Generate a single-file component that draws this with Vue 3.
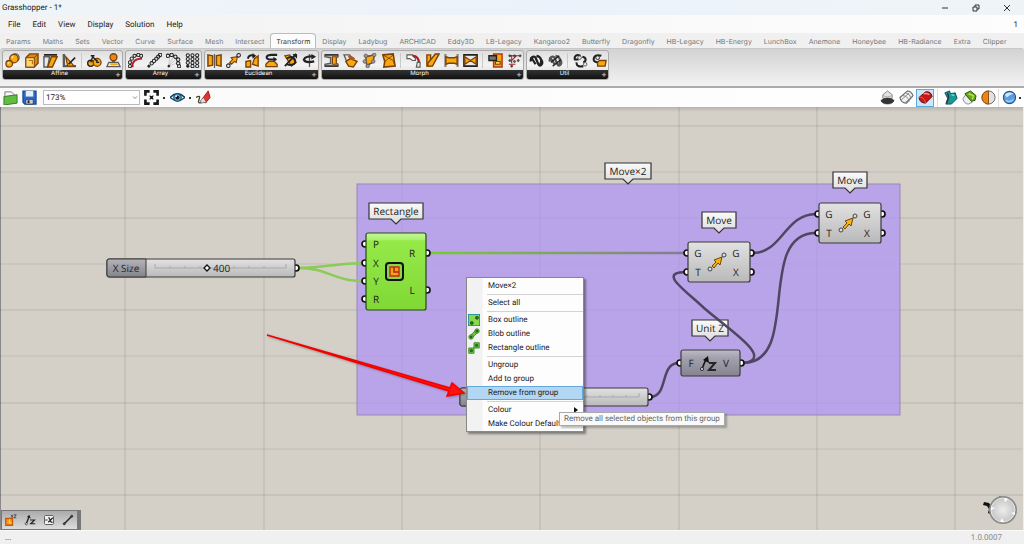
<script setup>
import { h, ref } from 'vue'

const amber = '#f9a90f'
const brown = '#7d4207'
const ink = '#222'
const grey = '#5c5c5c'
const pale = '#e9e9e9'
const red = '#b01f24'
const ring = (x, y, r) => `M${x - r} ${y}a${r} ${r} 0 1 0 ${2 * r} 0a${r} ${r} 0 1 0 ${-2 * r} 0z`
const rings = (r, ...points) => points.map(([x, y]) => ring(x, y, r)).join('')

// Each shape: [path, fill, stroke, stroke width]
const icons = {
  spheres: [[ring(11, 5, 4), pale, grey, 1.4], [ring(9.5, 6, 4.5), amber, brown, 1.4], [ring(4.5, 11.5, 3.5), amber, brown, 1.4], [rings(1, [8, 4.5], [3.7, 10.5]), '#ffe9a0', 'none', 0]],
  box: [['M2 5L6 1H15V11L11 15H2z', '#d68a16', brown, 1.4], ['M2 5H11V15H2zM11 5L15 1', '#ffd36e', brown, 1], ['M5 8H9V12', 'none', '#b87712', 1.2]],
  shear: [['M1 4H7L5 15H1z', pale, grey, 1.5], ['M1 2H15', 'none', ink, 1.8], ['M9 4H15L10 15H5z', amber, brown, 1.5]],
  angle: [['M2 1V14H15', 'none', grey, 2.6], ['M4 4L13 14H6z', amber, brown, 1.3], ['M14 5L7 12', 'none', ink, 1.8]],
  bike: [[ring(4, 11, 3.3), amber, ink, 1.4], [ring(10.8, 10, 4.2), amber, brown, 1.4], ['M4 10L6 4L11 9M4 3H8', 'none', ink, 1.5], ['M10.5 7V10H13', 'none', ink, 1.2]],
  bust: [['M3 10H13L15 14.5H1z', '#eee', grey, 1.4], ['M4 11H12L13 13H5z', amber, 'none', 0], [ring(8, 4.5, 3.7), '#f0860f', brown, 1.4], ['M8 8.5V10', 'none', grey, 3]],
  curveArray: [[rings(1.7, [2, 14], [2, 10], [4, 6], [7, 3], [11, 2], [14, 3]), pale, ink, 1.1], ['M5 15C4 9 8 6 15 6', 'none', red, 2]],
  lineArray: [[rings(1.8, [5, 11], [7.5, 8.5], [10, 6], [12, 4], [14, 2]), pale, ink, 1.1], [ring(2, 14, 1.2), ink, ink, 1]],
  polarArray: [['M3 14L4 2M3 14L8 3M3 14L11 6M3 14L13 10', 'none', '#bbb', 0.7], [rings(1.8, [2, 3], [6, 2], [10, 4], [13, 7], [13, 11], [14, 14]), pale, ink, 1.1], [ring(3, 14, 1), ink, ink, 1]],
  gridArray: [[rings(1.7, [3, 2.5], [8, 2.5], [13, 2.5], [3, 6.5], [8, 6.5], [13, 6.5], [3, 10.5], [8, 10.5], [13, 10.5], [8, 14], [13, 14]), pale, ink, 1.1], [ring(3, 14, 1.3), ink, ink, 1]],
  mirror: [['M1 2L6 3V13L1 14z', amber, brown, 1.6], ['M10 3L15 2V14L10 13z', amber, brown, 1.6], ['M8 1V16', 'none', grey, 1.3]],
  move: [['M3 13L13 3', 'none', ink, 1.2], ['M4 10L7 7L5.5 5L12 4L11 10L9 9L6 12z', amber, brown, 1.2], [rings(1.9, [2.5, 13.5], [13.5, 2.5]), pale, ink, 1.1]],
  orient: [['M1 9L6 8V15H1z', amber, brown, 1.5], ['M10 6L14 3V14L8 12z', amber, brown, 1.5], ['M3 6C4 2 7 2 9 3', 'none', ink, 2.2], ['M8 0L12 3L8 6z', ink, 'none', 0]],
  rotate: [['M2 12L5 9H11L14 12V14.5H2z', amber, brown, 1.4], ['M13 7H6C1 6 2 2 8 2H14', 'none', ink, 2.2], ['M10 4L14 7L10 9z', ink, 'none', 0]],
  rotate3d: [['M2 3L7 2L14 10L9 14z', amber, brown, 1.4], ['M14 1L2 14M4 6C8 3 12 4 13 8C14 12 9 14 4 12', 'none', ink, 2], ['M10 1H15V6z', ink, 'none', 0]],
  axis: [['M8 1V15', 'none', grey, 1.4], ['M13 4C8 3 3 4 2 7C3 10 8 10 13 9', 'none', ink, 2.4], ['M10 1L15 4L10 7z', ink, 'none', 0]],
  bend: [['M1 2H15V4L13 5V11L15 12V14H1V12L7 11V5L1 4z', '#c5c5c5', grey, 1.5], ['M9 4H13V12H9z', amber, brown, 1.2], ['M1 2H15M1 14H15', 'none', ink, 1.4]],
  blend: [['M1 2H7L9 6L4 9z', pale, grey, 1.4], ['M3 9L8 6L15 9L11 15L6 14z', amber, brown, 1.5], ['M6 3L12 7', 'none', '#b1581c', 3.2]],
  cage: [['M4 4L13 2L12 10L5 13z', amber, brown, 1.5], ['M3 4L13 2L12 9L6 14', 'none', grey, 1], [rings(1.9, [4, 3], [13, 2], [3, 9], [12, 9], [6, 14]), '#999', grey, 0.8]],
  twisted: [['M2 2L13 1L15 14L3 15L4 9z', amber, brown, 1.7], ['M2 2L13 8L15 14M4 9L13 2', 'none', brown, 1]],
  flow: [['M1 2H7L10 6V8H7L4 6H1z', '#fafafa', grey, 1.2], ['M7 3C12 3 14 7 14 12', 'none', red, 2.4], ['M12 10H15V15H11z', pale, grey, 1.2]],
  split: [['M2 2H6V14H2z', amber, brown, 1.5], ['M11 1H15L8 14H3V11z', amber, brown, 1.5]],
  stretch: [['M1.5 1V15M14.5 1V15', 'none', '#888', 2.4], ['M2 4L5 5H11L14 4V12L11 11H5L2 12z', amber, brown, 1.5]],
  taper: [['M1 2H15V14H1z', pale, ink, 1.7], ['M2 4L8 8L2 12zM14 4L8 8L14 12z', amber, brown, 1.3]],
  boxmap: [['M6 1H15V15H6z', amber, '#b23a12', 1.6], ['M1 3H9V8H1z', '#807466', ink, 1.5], ['M8 9H13V12H8z', '#ffd45f', brown, 1.2]],
  points: [['M2 3H13M5 2V11M10 3L4 9M2 12L9 12', 'none', red, 1.1], [rings(1.1, [3, 3], [8, 3], [14, 3], [3, 8], [8, 9], [12, 8], [5, 14]), grey, ink, 0.6]],
  knotted: [['M2 9C1 5 5 2 7 5L10 12C12 16 16 11 13 7M2 4L7 12M8 3C14 4 14 10 11 14', 'none', ink, 2.4]],
  knotted2: [['M2 9C1 5 5 2 7 5L10 12C12 16 16 11 13 7M2 4L7 12M8 3C14 4 14 10 11 14', 'none', '#555', 2.4], ['M3 10L12 3M5 14L14 7', 'none', ink, 1.4]],
  cycle: [['M8 3C4 1 1 3 2 7H6M10 4C15 5 14 9 11 10M4 10C3 14 7 15 11 14', 'none', ink, 2.2], [rings(1.9, [7, 5], [13, 12]), pale, grey, 1]],
  cyclebox: [['M10 3C4 1 1 4 2 8C3 10 5 10 7 10', 'none', ink, 2.2], [ring(6, 5, 2), pale, ink, 1], ['M6 10L8 8H15L14 14H6z', amber, brown, 1.5]],
  folder: [['M2 2H9L12 5V14H2z', '#f7f7f7', '#777', 1], ['M1 7L15 5V14L1 16z', '#63bd43', '#317a26', 1]],
  save: [['M1 1H15V15H3L1 13z', '#2b69c6', '#16428e', 1.2], ['M4 1H12V7H4z', '#e8eef8', 'none', 0], ['M4 10H12V15H4z', '#c8cdd4', '#333', 0.8], ['M6 11H8V14H6z', '#222', 'none', 0]],
  extents: [['M1.5 6V1.5H6M10 1.5H14.5V6M14.5 10V14.5H10M6 14.5H1.5V10', 'none', '#171717', 2.8], ['M6 6L10 10M10 6L6 10', 'none', '#171717', 1.3], [ring(8, 8, 1.5), '#171717', 'none', 0]],
  eye: [['M0 8Q8 0 16 8Q8 15 0 8z', '#fff', '#183c57', 1.4], [ring(8, 8, 4), '#55a9cf', '#174b6c', 1.2], [ring(8, 8, 2), '#0c1f2d', 'none', 0], [ring(6.5, 6.5, 1), '#fff', 'none', 0]],
  brush: [['M0 8C5 5 4 8 3 11C2 14 4 15 7 12', 'none', '#442', 1.4], ['M7 9L13 1L15 8L10 14z', '#e8312d', '#9c1717', 1], ['M5 11L8 8L11 13L5 14z', '#e8dcd8', '#655', 0.8]],
  shadow: [['M3 5L8 1L13 5V9H3z', '#e2e2e2', '#888', 1], ['M3 6Q8 9 13 6', 'none', '#aaa', 1], ['M1 11Q8 6 15 11Q14 15 8 15Q2 15 1 11z', '#333', '#222', 0.5]],
  wire: [['M1 8L9 1Q13 1 15 6L8 14Q2 14 1 8z', '#f2f2f2', '#666', 1.2], ['M4 6Q9 6 11 12M7 3Q12 4 13 9M2 11L11 3M6 14L14 7', 'none', '#888', 1]],
  solid: [['M1 8L8 2Q14 1 15 7L8 14Q2 14 1 8z', '#c91616', '#5f0707', 1], ['M1 8Q6 6 8 14', 'none', '#f15a50', 1], ['M6 4Q10 3 12 5', 'none', '#ff9188', 1.5]],
  teal: [['M2 3L7 1L8 4L13 3L15 9L9 15H3L5 9z', '#169a9a', '#064f58', 1], ['M5 3L6 8L4 14', 'none', '#333', 1.5], ['M9 5L12 6', 'none', '#7ee0dc', 1.5]],
  green: [['M1 9L4 5L11 13L7 15Q2 15 1 9z', '#eee', '#888', 1], ['M3 4L9 1L15 6L14 11L10 12z', '#67a917', '#294f0d', 1], ['M7 4L12 6L11 10', 'none', '#b4e559', 1.5]],
  halves: [[ring(8, 8, 7), '#e2e2e2', '#666', 1], ['M8 1A7 7 0 0 0 8 15z', '#e88718', '#8b4b0e', 1]],
  globe: [[ring(8, 8, 6.5), '#5d9cdf', '#25558b', 1.2], ['M3 5Q7 1 12 4Q8 5 5 8z', '#c9e8ff', 'none', 0], ['M4 11Q9 14 12 10', 'none', '#9cd1fa', 1.5]],
  boxOutline: [['M0 0H16V16H0z', '#8ad84d', '#1683b8', 2], [rings(2, [5, 12], [12, 5]), '#267a23', '#154d16', 1]],
  blobOutline: [['M4 12L12 4', 'none', '#3d8d2d', 5], ['M4 12L12 4', 'none', '#78c54c', 3], [rings(3, [4, 12], [12, 4]), '#8ad84d', '#2f7b27', 1], [rings(1.5, [4, 12], [12, 4]), '#267a23', '#154d16', 1]],
  rectOutline: [['M1 8H8V15H1zM8 1H15V8H8z', '#7bc94a', '#3d8d2d', 1.3], [rings(1.6, [4.5, 11.5], [11.5, 4.5]), '#267a23', '#154d16', 1]],
  square: [['M1 6H10V15H1z', '#f79a19', '#c95a08', 1.8], ['M6 7V12H9', 'none', '#ffd65b', 1.5], ['M8 1L11 5M11 1L8 5M12 1H15L12 5H15', 'none', '#333', 1]],
  unitz: [['M3 13L7 3', 'none', '#222', 1.8], ['M7 1L9 6L4 4z', '#222', 'none', 0], ['M8 8H14L9 13H15', 'none', '#222', 1.6], [ring(3, 13, 1.5), '#ddd', '#222', 0.8]],
  negative: [['M3 2H13L14 3V13L13 14H3L2 13V3z', '#f2f2f2', '#555', 1.2], ['M3 8H6M7 5H8L11 11H13M13 5L7 11', 'none', '#222', 1.6]],
  line: [['M3 13L13 3', 'none', '#222', 1.8], [rings(1.4, [3, 13], [13, 3]), '#555', '#222', 1]]
}

const Icon = (props) =>
  h('svg', { viewBox: '0 0 16 16', 'aria-hidden': 'true' },
    icons[props.name].map(([d, fill, stroke, width]) => h('path', { d, fill, stroke, 'stroke-width': width })))
Icon.props = ['name']

const menus = ['File', 'Edit', 'View', 'Display', 'Solution', 'Help']
const tabs = ['Params', 'Maths', 'Sets', 'Vector', 'Curve', 'Surface', 'Mesh', 'Intersect', 'Transform', 'Display', 'Ladybug', 'ARCHICAD', 'Eddy3D', 'LB-Legacy', 'Kangaroo2', 'Butterfly', 'Dragonfly', 'HB-Legacy', 'HB-Energy', 'LunchBox', 'Anemone', 'Honeybee', 'HB-Radiance', 'Extra', 'Clipper']
const activeTab = ref('Transform')
const panels = [
  { name: 'Affine', tools: ['spheres', 'box', 'shear', 'angle', '', 'bike', 'bust'] },
  { name: 'Array', tools: ['curveArray', 'lineArray', 'polarArray', 'gridArray'] },
  { name: 'Euclidean', tools: ['mirror', 'move', 'orient', 'rotate', 'rotate3d', 'axis'] },
  { name: 'Morph', tools: ['bend', 'blend', 'cage', 'twisted', '', 'flow', 'split', 'stretch', 'taper', '', 'boxmap', 'points'] },
  { name: 'Util', tools: ['knotted', 'knotted2', '', 'cycle', 'cyclebox'] }
]
const displayGroups = [['shadow', 'wire', 'solid'], ['teal', 'green', 'halves'], ['globe']]
const zoom = ref('173%')

const verticals = [125, 264, 402, 540, 679, 817, 955]
const horizontals = [19, 65, 111, 157, 203, 249, 296, 342, 388]
const moveNode = (x, y) => ({
  kind: 'grey', x, y, w: 62, h: 40,
  inputs: [['G', 11], ['T', 30]], outputs: [['G', 11], ['X', 30]]
})
const nodes = [
  { kind: 'green', x: 366, y: 126, w: 60, h: 77, inputs: [['P', 11], ['X', 30], ['Y', 48], ['R', 66]], outputs: [['R', 20], ['L', 57]] },
  moveNode(688, 135),
  moveNode(819, 96),
  { kind: 'dark', x: 681, y: 243, w: 59, h: 26, inputs: [['F', 13]], outputs: [['V', 13]] }
]
const callouts = [
  { text: 'Rectangle', x: 396, y: 96, w: 54 },
  { text: 'Move×2', x: 628, y: 56, w: 46 },
  { text: 'Move', x: 719, y: 105, w: 34 },
  { text: 'Move', x: 850, y: 65, w: 34 },
  { text: 'Unit Z', x: 710, y: 213, w: 36 }
]
const wires = [
  'M753 146C782 146 785 107 816 107',
  'M743 256C802 256 755 126 816 126',
  'M650 290C669 290 659 256 679 256'
]
const menuItems = [
  { text: 'Move×2' }, {}, { text: 'Select all' }, {},
  { text: 'Box outline', icon: 'boxOutline' }, { text: 'Blob outline', icon: 'blobOutline' }, { text: 'Rectangle outline', icon: 'rectOutline' }, {},
  { text: 'Ungroup' }, { text: 'Add to group' }, { text: 'Remove from group', hot: true }, {},
  { text: 'Colour', sub: true }, { text: 'Make Colour Default' }
]
</script>

<template>
  <div class="window">
    <header class="titlebar">
      <span>Grasshopper - 1*</span>
      <div class="window-buttons">
        <button aria-label="Minimise"><svg viewBox="0 0 8 8"><path d="M1 4H7" /></svg></button>
        <button aria-label="Restore"><svg viewBox="0 0 8 8"><path d="M1 3H5V7H1zM3 3V1H7V5H5" /></svg></button>
        <button aria-label="Close"><svg viewBox="0 0 8 8"><path d="M1 1L7 7M7 1L1 7" /></svg></button>
      </div>
    </header>

    <nav class="menubar">
      <button v-for="m in menus" :key="m">{{ m }}</button>
      <span class="document-count">1</span>
    </nav>

    <nav class="tabs">
      <button v-for="t in tabs" :key="t" :class="{ active: t === activeTab }" @click="activeTab = t">{{ t }}</button>
    </nav>

    <div class="ribbon">
      <section v-for="p in panels" :key="p.name" class="panel">
        <div class="tools">
          <template v-for="(t, i) in p.tools" :key="i">
            <button v-if="t" :aria-label="t"><Icon :name="t" /></button>
            <i v-else class="divider"></i>
          </template>
        </div>
        <div class="panel-name"><span>{{ p.name }}</span><b>+</b></div>
      </section>
    </div>

    <div class="toolbar">
      <button aria-label="Open"><Icon name="folder" /></button>
      <button aria-label="Save"><Icon name="save" /></button>
      <div class="zoom-box">
        <select v-model="zoom" aria-label="Zoom"><option>100%</option><option>173%</option><option>200%</option></select>
        <svg viewBox="0 0 6 4"><path d="M1 1L3 3L5 1" /></svg>
      </div>
      <button aria-label="Zoom extents"><Icon name="extents" /></button><i class="dot"></i>
      <button aria-label="Preview"><Icon name="eye" /></button><i class="dot"></i>
      <button aria-label="Sketch"><Icon name="brush" /></button>
      <div class="modes">
        <div v-for="g in displayGroups" :key="g[0]" class="mode-group">
          <button v-for="m in g" :key="m" :aria-label="m" :class="{ chosen: m === 'solid' }"><Icon :name="m" /></button>
        </div>
        <i class="dot"></i>
      </div>
    </div>

    <main class="canvas">
      <svg class="graph">
        <defs>
          <linearGradient id="grey" x2="0" y2="1"><stop offset="0" stop-color="#e2e2e2" /><stop offset="1" stop-color="#b9b9b9" /></linearGradient>
          <linearGradient id="green" x2="0" y2="1"><stop offset="0" stop-color="#c4f89a" /><stop offset=".09" stop-color="#a9f26c" /><stop offset=".1" stop-color="#95ea48" /><stop offset="1" stop-color="#80d835" /></linearGradient>
          <linearGradient id="dark" x2="0" y2="1"><stop offset="0" stop-color="#bdbbc6" /><stop offset=".3" stop-color="#a3a1ad" /><stop offset="1" stop-color="#85838f" /></linearGradient>
          <linearGradient id="label" x2="0" y2="1"><stop offset="0" stop-color="#b4b4ba" /><stop offset="1" stop-color="#83838b" /></linearGradient>
          <linearGradient id="callout" x2="0" y2="1"><stop offset="0" stop-color="#fafafa" /><stop offset="1" stop-color="#dcdcdc" /></linearGradient>
          <linearGradient id="fade" gradientUnits="userSpaceOnUse" x1="429" x2="685" y1="0" y2="0"><stop offset="0" stop-color="#78cb2e" /><stop offset="1" stop-color="#857b96" /></linearGradient>
          <linearGradient id="edge" x2="0" y2="1"><stop offset="0" stop-color="#000" stop-opacity=".14" /><stop offset="1" stop-color="#000" stop-opacity="0" /></linearGradient>
          <radialGradient id="dial"><stop offset="0" stop-color="#eee" /><stop offset="1" stop-color="#c4c4c4" /></radialGradient>
        </defs>
        <line v-for="x in verticals" :key="'v' + x" class="grid" :x1="x" :x2="x" y1="0" y2="100%" />
        <line v-for="(y, i) in horizontals" :key="'h' + y" :class="['grid', { minor: i % 2 }]" x1="0" x2="100%" :y1="y" :y2="y" />
        <rect class="group" x="357" y="77" width="543" height="231" />
        <rect width="100%" height="5" fill="url(#edge)" />

        <path class="wire live" d="M297 161C331 161 330 156 365 156M297 161C331 161 330 174 365 174" />
        <path class="wire" d="M429 146L685 146.1" stroke="url(#fade)" />
        <path v-for="w in wires" :key="w" class="wire" :d="w" />

        <g v-for="(c, i) in callouts" :key="'c' + i" :transform="`translate(${c.x} ${c.y})`">
          <path class="callout" :d="`M${-c.w / 2} 0H${c.w / 2}V16H5L0 21L-5 16H${-c.w / 2}z`" />
          <text y="12" text-anchor="middle">{{ c.text }}</text>
        </g>
        <path class="wire" d="M743 256C776 252 728 222 704 201C684 182 657 165 687 165" />

        <g v-for="(n, i) in nodes" :key="'n' + i" :transform="`translate(${n.x} ${n.y})`">
          <circle v-for="p in n.inputs" :key="'i' + p[1]" class="port" cx="-1" :cy="p[1]" r="3" />
          <circle v-for="p in n.outputs" :key="'o' + p[1]" class="port" :cx="n.w + 1" :cy="p[1]" r="3" />
          <rect :class="['node', n.kind]" :width="n.w" :height="n.h" rx="2" />
          <text v-for="p in n.inputs" :key="'ti' + p[1]" x="10" :y="p[1] + 4" text-anchor="middle">{{ p[0] }}</text>
          <text v-for="p in n.outputs" :key="'to' + p[1]" :x="n.w - 14" :y="p[1] + 4" text-anchor="middle">{{ p[0] }}</text>
        </g>
        <g transform="translate(385 155)">
          <rect class="emblem" x="1" y="1" width="17" height="17" rx="3" />
          <path d="M5 5H14V14H5z" fill="#f5a11b" stroke="#c42b10" stroke-width="1.4" /><path d="M9 5V10H14" fill="none" stroke="#b62314" stroke-width="1.6" />
        </g>
        <g v-for="(m, i) in [[708, 146], [839, 107]]" :key="'m' + i" :transform="`translate(${m[0]} ${m[1]})`">
          <path d="M2 16L16 2" stroke="#555" />
          <path d="M4 13L8 9L6 7L14 4L12 12L10 10L6 15z" fill="#f9b30c" stroke="#72420a" />
          <circle cx="2" cy="16" r="2" fill="#ddd" stroke="#444" /><circle cx="16" cy="2" r="2" fill="#ddd" stroke="#444" />
        </g>
        <g transform="translate(700 248)">
          <path d="M2 14L6 4" stroke="#111" stroke-width="1.6" /><path d="M8 1L9 8L3 5z" fill="#111" />
          <circle cx="2" cy="14" r="1.6" fill="#ccc" stroke="#333" /><path d="M9 8H15L9 15H16" fill="none" stroke="#252525" stroke-width="2" />
        </g>

        <g transform="translate(107 152)">
          <circle class="port" cx="189" cy="9" r="3" />
          <rect class="node grey" width="188" height="18" rx="2" /><path d="M2 0H39V18H2Q0 18 0 16V2Q0 0 2 0z" class="slider-label" />
          <path class="rule" d="M48 9H179M48 5V9M63 7V9M78 7V9M93 7V9M127 7V9M142 7V9M157 7V9M179 5V9" />
          <path d="M100 6L103 9L100 12L97 9z" fill="#fff" stroke="#111" stroke-width="1.3" />
          <text x="19" y="13" text-anchor="middle">X Size</text><text x="106" y="13">400</text>
        </g>
        <g transform="translate(460 281)">
          <circle class="port" cx="189" cy="9" r="3" />
          <rect class="node grey" width="188" height="18" rx="2" /><path d="M2 0H39V18H2Q0 18 0 16V2Q0 0 2 0z" class="slider-label" />
          <path class="rule" d="M48 9H179M127 7V9M140 7V9M153 7V9M166 7V9M179 5V9" />
        </g>
        <path class="arrow" d="M267 228L450 281L452 276L464 286L447 289L449 284z" />
      </svg>

      <div class="context-menu" role="menu">
        <template v-for="(m, i) in menuItems" :key="i">
          <button v-if="m.text" role="menuitem" :class="{ hot: m.hot }">
            <Icon v-if="m.icon" :name="m.icon" /><span>{{ m.text }}</span><b v-if="m.sub"></b>
          </button>
          <hr v-else>
        </template>
      </div>
      <div class="tooltip" role="tooltip">Remove all selected objects from this group</div>

      <div class="recent">
        <button v-for="t in ['square', 'unitz', 'negative', 'line']" :key="t" :aria-label="t"><Icon :name="t" /></button>
      </div>
      <svg class="compass" viewBox="0 0 36 30">
        <path d="M9 11L12 5L16 3L18 1L20 3L16 6C12 9 10 11 9 16L10 20L6 18L7 14L5 11L1 10L2 7L7 8z" fill="#111" />
        <circle cx="21" cy="15" r="13" fill="url(#dial)" stroke="#8b8b8b" stroke-width="2" />
        <circle cx="21" cy="15" r="12" fill="none" stroke="#e8e8e8" />
        <path d="M22 3L26 4L23 7zM9 12L13 13L9 15zM33 17V20L29 18zM18 27L20 23L22 27z" fill="#fff" />
      </svg>
    </main>

    <footer class="status"><span>...</span><span class="version">1.0.0007</span></footer>
  </div>
</template>

<style>
body { margin: 0; overflow: hidden; }
</style>

<style scoped>
.window { min-height: 100vh; display: flex; flex-direction: column; background: #f0f0f0; color: #222; font: 8px/14px Roboto, "Noto Sans", sans-serif; text-rendering: geometricPrecision; }
* { box-sizing: border-box; }
button { margin: 0; padding: 0; border: 0; background: none; color: inherit; font: inherit; text-rendering: inherit; display: flex; align-items: center; justify-content: center; }
svg { display: block; flex: none; }
.titlebar { height: 15px; display: flex; align-items: center; justify-content: space-between; padding: 0 2px; background: linear-gradient(90deg, #eff4f8, #ecf2fb 55%, #eef4f6); }
.window-buttons { display: flex; }
.window-buttons button { width: 31px; height: 15px; }
.window-buttons svg { width: 8px; height: 8px; fill: none; stroke: #333; }
.menubar { height: 18px; display: flex; align-items: center; gap: 12px; padding: 2px 6px 0 8px; background: linear-gradient(90deg, #f2f2f2, #fdfdfd); }
.document-count { margin-left: auto; }
.tabs { height: 15px; display: flex; align-items: flex-end; justify-content: space-between; padding: 0 12px 0 0; font: 7px/13px Inter, sans-serif; color: #777; }
.tabs button { padding: 0 5px; height: 14px; white-space: nowrap; border: 1px solid transparent; border-bottom: 0; }
.tabs .active { height: 15px; color: #333; background: #fcfcfc; border-color: #bbb; border-radius: 4px 4px 0 0; }
.ribbon { height: 40px; display: flex; align-items: flex-start; gap: 2px; padding: 1px 2px; border-top: 1px solid #c8c8c8; border-bottom: 2px solid #aaa; border-radius: 3px 3px 0 0; background: linear-gradient(#d3d3d3, #f2f2f2); }
.panel { border: 1px solid #aaa; border-radius: 3px; background: linear-gradient(#dedede, #f3f3f3 50%, #d2d2d2); overflow: hidden; }
.tools { height: 19px; display: flex; align-items: center; gap: 1px; }
.tools button { width: 18px; height: 19px; }
.tools svg { width: 15px; height: 15px; }
.divider { width: 1px; height: 15px; margin: 0 2px; background: #c9c9c9; flex: none; }
.panel-name { height: 9px; display: flex; align-items: flex-start; background: linear-gradient(#333, #111); color: #fff; font: 6px/7px Inter, sans-serif; text-align: center; }
.panel-name span { flex: 1; padding-right: 6px; }
.panel-name b { width: 8px; margin-left: -8px; font-size: 8px; line-height: 9px; color: #aaa; }
.toolbar { height: 19px; display: flex; align-items: center; gap: 3px; padding: 0 2px; background: linear-gradient(90deg, #fafafa, #fff); }
.toolbar button { width: 16px; height: 18px; }
.toolbar svg { width: 15px; height: 15px; }
.zoom-box { position: relative; width: 97px; margin: 0 0 0 3px; }
.zoom-box select { display: block; width: 100%; height: 15px; padding: 0 2px; border: 1px solid #bbb; border-radius: 0; appearance: none; background: #fff; color: #222; font: 8px/13px Roboto, sans-serif; text-rendering: inherit; }
.zoom-box svg { position: absolute; right: 2px; top: 5px; width: 6px; height: 5px; fill: none; stroke: #888; }
.dot { width: 2px; height: 2px; margin: 0 1px; background: #333; flex: none; }
.modes { margin-left: auto; display: flex; align-items: center; }
.mode-group { display: flex; gap: 1px; }
.mode-group + .mode-group { margin-left: 3px; padding-left: 3px; border-left: 1px solid #ddd; }
.mode-group:nth-child(3) { margin-left: 1px; padding-left: 1px; }
.modes button { width: 18px; }
.modes .chosen { border: 1px solid #5ba7e0; background: #cfe6f9; }
.canvas { position: relative; flex: 1; background: #d4d0c8; border-right: 1px solid #eee; overflow: hidden; box-shadow: inset 1px 0 #888; }
.graph { position: absolute; inset: 0; width: 100%; height: 100%; }
.graph text { font: 10px "Open Sans", sans-serif; fill: #222; }
.grid { stroke: #000; stroke-opacity: .13; }
.minor { stroke-opacity: .08; }
.group { fill: #af91f6; fill-opacity: .7; stroke: #9687b6; }
.wire { fill: none; stroke-width: 2.5; stroke-linecap: round; }
.wire:not([stroke]) { stroke: #504563; }
.wire.live { stroke: #8ccb57; }
.port { fill: #fff; stroke: #111; stroke-width: 1.7; }
.node { stroke: #3b3b3b; stroke-width: 1.2; }
.grey { fill: url(#grey); }
.green { fill: url(#green); stroke: #244c10; }
.dark { fill: url(#dark); }
.slider-label { fill: url(#label); stroke: #3b3b3b; }
.rule { fill: none; stroke: #aaa; }
.callout { fill: url(#callout); stroke: #333; stroke-width: 1.2; }
.emblem { fill: #87d64b; stroke: #111; stroke-width: 2; }
.arrow { fill: #ff1212; stroke: #f50000; stroke-width: 1.5; filter: drop-shadow(1px 1px 1px #5558); }
.context-menu { position: absolute; left: 466px; top: 170px; width: 118px; padding: 1px 0 0; border: 1px solid #888; background: linear-gradient(90deg, #f2f2f2 15px, #fdfdfd 16px); box-shadow: 2px 2px 2px #3338; }
.context-menu button { position: relative; width: 100%; height: 14px; padding: 0 0 0 21px; justify-content: flex-start; white-space: nowrap; }
.context-menu .hot { background: #b3d6f2; outline: 1px solid #65a9dc; outline-offset: -1px; }
.context-menu svg { position: absolute; left: 1px; top: 1px; width: 12px; height: 12px; }
.context-menu b { margin-left: auto; margin-right: 5px; border: 3px solid transparent; border-left: 4px solid #111; border-right: 0; }
.context-menu hr { height: 1px; margin: 1px 0 1px 20px; border: 0; background: #d2d2d2; }
.tooltip { position: absolute; left: 559px; top: 305px; padding: 0 4px; border: 1px solid #aaa; background: #fafafa; color: #666; white-space: nowrap; line-height: 12px; box-shadow: 2px 2px 2px #3335; }
.recent { position: absolute; left: 1px; bottom: 0; width: 80px; height: 20px; display: flex; align-items: center; border: 1px solid #777; border-right: 4px solid #777; background: linear-gradient(#aaa, #ddd); }
.recent button { flex: 1; }
.recent svg { width: 12px; height: 12px; }
.compass { position: absolute; right: 5px; bottom: 5px; width: 36px; height: 30px; }
.status { height: 14px; display: flex; justify-content: space-between; align-items: center; padding: 1px 22px 0 5px; border-top: 1px solid #fafafa; }
.version { color: #888; }
</style>
